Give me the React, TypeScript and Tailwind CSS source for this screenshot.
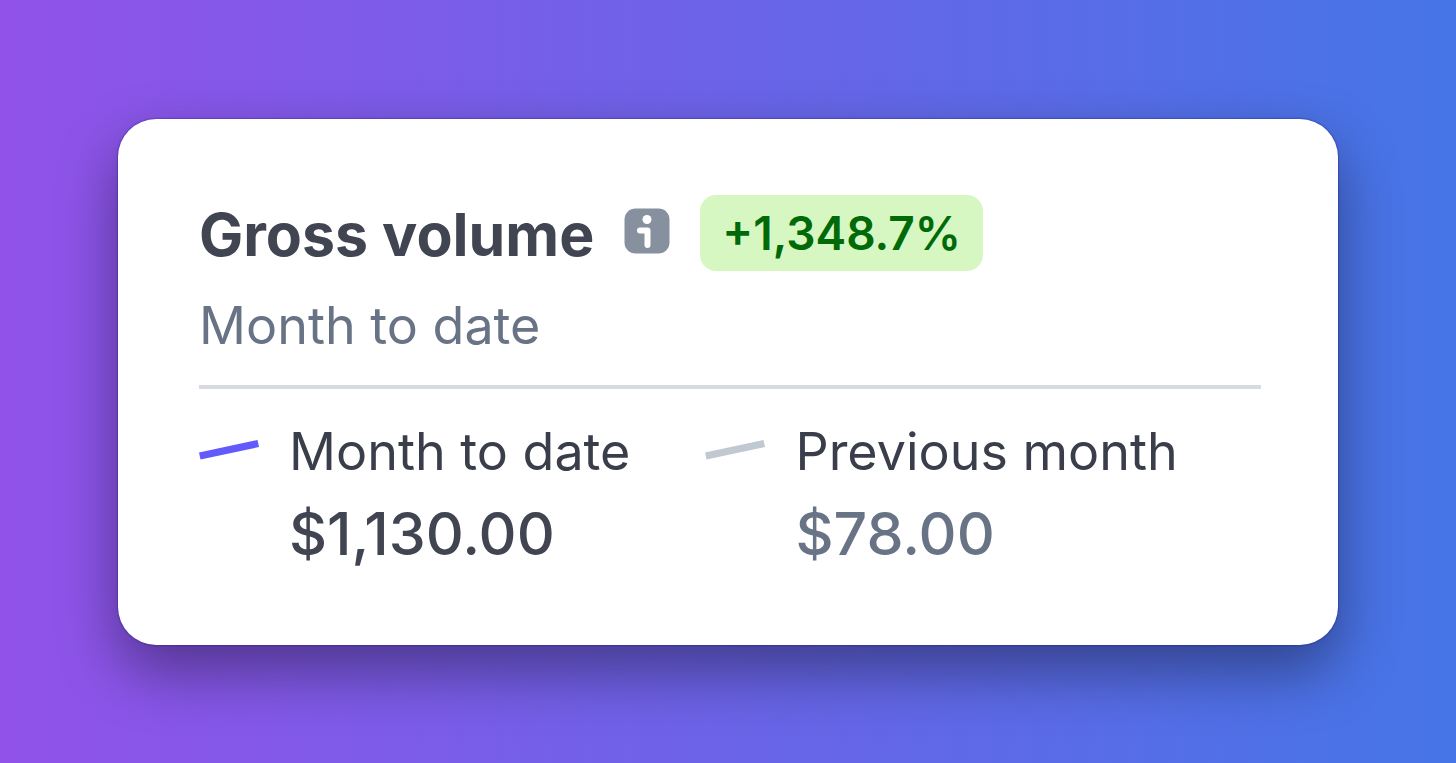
import React from "react";

function TrendMark({ className }: { className: string }) {
  return (
    <svg viewBox="0 0 60 22" className={`mt-[18px] h-[22px] w-[60px] shrink-0 ${className}`} aria-hidden="true">
      <path d="M0 13.5L58.500 1L60 8L1.500 20.500Z" fill="currentColor" />
    </svg>
  );
}

function Metric({ label, value, mark, tone }: { label: string; value: string; mark: string; tone: string }) {
  return (
    <div className="flex gap-[30px]">
      <TrendMark className={mark} />
      <dl>
        <dt className="text-[52px] leading-[62px] text-[#3a3e4b]">{label}</dt>
        <dd className={`mt-4 text-[59px] leading-[70px] font-medium ${tone}`}>{value}</dd>
      </dl>
    </div>
  );
}

export default function App() {
  return (
    <main className="flex min-h-screen items-center justify-center bg-linear-[90deg,#9152e9_0%,#4575e6_100%] p-[118px] font-['Inter',sans-serif]">
      <section className="w-full rounded-[38px] bg-white pt-[76px] pr-[77px] pb-[76px] pl-[81px] shadow-[0_0_2px_rgba(20,0,120,0.8),0_26px_60px_rgba(0,0,0,0.4)]">
        <header>
          <div className="flex items-center gap-[30px]">
            <h1 className="pt-1 text-[59px] leading-[72px] font-bold text-[#414552]">Gross volume</h1>
            <button type="button" aria-label="About gross volume" className="mb-1">
              <svg viewBox="0 0 46 46" className="size-[46px]" aria-hidden="true">
                <rect x="0.5" y="0.5" width="45" height="45" rx="11" fill="#87909f" />
                <circle cx="23" cy="11.500" r="4.500" fill="white" />
                <path d="M16 22.500H23.500V37" fill="none" stroke="white" strokeWidth="6" strokeLinecap="round" strokeLinejoin="round" />
              </svg>
            </button>
            <span className="rounded-[16px] bg-[#d7f7c2] px-[22px] text-[46px] leading-[76px] font-semibold text-[#006908]">+1,348.7%</span>
          </div>
          <p className="mt-6 text-[52px] leading-[62px] text-[#687385]">Month to date</p>
        </header>
        <hr className="mt-7 border-t-4 border-[#d5dbe1]" />
        <div className="mt-8 flex gap-[75px]">
          <Metric label="Month to date" value="$1,130.00" mark="text-[#625afa]" tone="text-[#414552]" />
          <Metric label="Previous month" value="$78.00" mark="text-[#c0c8d2]" tone="text-[#687385]" />
        </div>
      </section>
    </main>
  );
}
